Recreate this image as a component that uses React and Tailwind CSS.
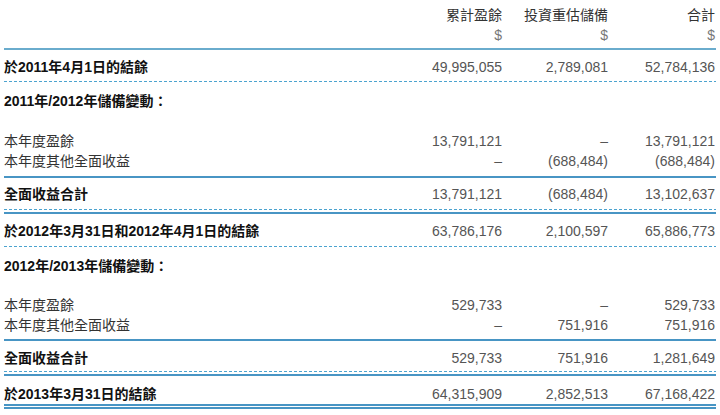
import React from "react";

const FONT = { fontFamily: '"Liberation Sans", "Noto Sans CJK TC", sans-serif' };

function Solid({ className = "" }) {
  return <div className={`h-[2px] bg-[#4895c4] ${className}`} />;
}

function Dashed() {
  return (
    <div className="h-[1px] bg-[linear-gradient(to_right,#4ca3cf_3px,transparent_3px)] bg-[length:5px_1px]" />
  );
}

function Cells({ values }) {
  return (
    <>
      {values.map((v, i) => (
        <div
          key={i}
          className={`${i === 0 ? "w-[105px]" : i === 1 ? "w-[106px]" : "w-[107px]"} pr-[1px] text-right text-[#555]`}
        >
          {v}
        </div>
      ))}
    </>
  );
}

function Row({ label, values, bold, h, pt }) {
  return (
    <div className={`flex leading-[20px] ${h} ${pt}`}>
      <div className={`flex-1 ${bold ? "font-bold text-[#111]" : "text-[#333]"}`}>{label}</div>
      {values && <Cells values={values} />}
    </div>
  );
}

function Movement({ title, rows, topPad, bottomPad }) {
  return (
    <>
      <div className="h-[39px] pt-[9px] leading-[20px] font-bold text-[#111]">{title}</div>
      <div className={`${topPad} ${bottomPad}`}>
        {rows.map((r, i) => (
          <Row key={i} label={r[0]} values={r.slice(1)} h="h-[20px]" pt="" />
        ))}
      </div>
    </>
  );
}

export default function App() {
  return (
    <div className="w-[720px] h-[415px] bg-white text-[14px] overflow-hidden" style={FONT}>
      <div className="ml-[4px] w-[712px]">
        {/* column heads */}
        <div className="h-[48px] pt-[5px] leading-[20px] flex justify-end text-[#333]">
          {[
            ["累計盈餘", "w-[105px]"],
            ["投資重估儲備", "w-[106px]"],
            ["合計", "w-[107px]"],
          ].map(([t, w]) => (
            <div key={t} className={`${w} pr-[1px] text-right`}>
              <div>{t}</div>
              <div className="text-[#777]">$</div>
            </div>
          ))}
        </div>
        <div className="h-[2px] bg-[#6aaccd]" />

        <Row
          label="於2011年4月1日的結餘"
          values={["49,995,055", "2,789,081", "52,784,136"]}
          bold
          h="h-[31px]"
          pt="pt-[7px]"
        />
        <Dashed />

        <Movement
          title="2011年/2012年儲備變動："
          topPad="pt-[10px]"
          bottomPad="pb-[5px]"
          rows={[
            ["本年度盈餘", "13,791,121", "–", "13,791,121"],
            ["本年度其他全面收益", "–", "(688,484)", "(688,484)"],
          ]}
        />
        <Solid />

        <Row
          label="全面收益合計"
          values={["13,791,121", "(688,484)", "13,102,637"]}
          bold
          h="h-[31px]"
          pt="pt-[6px]"
        />
        <Dashed />
        <Solid className="mt-[2px]" />

        <Row
          label="於2012年3月31日和2012年4月1日的結餘"
          values={["63,786,176", "2,100,597", "65,886,773"]}
          bold
          h="h-[32px]"
          pt="pt-[7px]"
        />
        <Dashed />

        <Movement
          title="2012年/2013年儲備變動："
          topPad="pt-[9px]"
          bottomPad="pb-[4px]"
          rows={[
            ["本年度盈餘", "529,733", "–", "529,733"],
            ["本年度其他全面收益", "–", "751,916", "751,916"],
          ]}
        />
        <Solid />

        <Row
          label="全面收益合計"
          values={["529,733", "751,916", "1,281,649"]}
          bold
          h="h-[30px]"
          pt="pt-[7px]"
        />
        <Dashed />
        <Solid className="mt-[2px]" />

        <Row
          label="於2013年3月31日的結餘"
          values={["64,315,909", "2,852,513", "67,168,422"]}
          bold
          h="h-[28px]"
          pt="pt-[8px]"
        />
        <Solid />
        <Solid className="mt-[1px]" />
      </div>
    </div>
  );
}
